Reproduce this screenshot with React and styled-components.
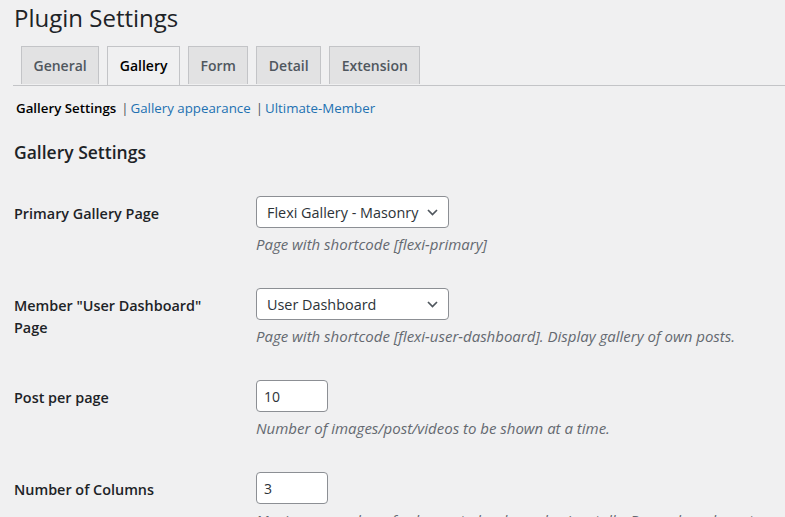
import React from 'react';
import styled, { createGlobalStyle } from 'styled-components';

const GlobalStyle = createGlobalStyle`
  body {
    margin: 0;
    background: #f0f0f1;
    color: #3c434a;
    font-family: "Open Sans", "Noto Sans", sans-serif;
    font-size: 13px;
  }
`;

const Wrap = styled.div`
  padding: 0 0 0 13px;
  overflow: hidden;
`;

const PageTitle = styled.h1`
  margin: 0;
  padding: 3px 0 0 1px;
  font-size: 24px;
  font-weight: 400;
  line-height: 30px;
  color: #1d2327;
`;

const TabBar = styled.nav`
  display: flex;
  gap: 8px;
  margin-top: 13px;
  padding-left: 8px;
  border-bottom: 1px solid #c3c4c7;
  height: 39px;
`;

const Tab = styled.a`
  display: block;
  padding: 7px 11.5px;
  font-size: 14px;
  font-weight: 600;
  line-height: 24px;
  border: 1px solid #c3c4c7;
  border-bottom: none;
  background: ${p => (p.$active ? '#f0f0f1' : '#e2e2e3')};
  color: ${p => (p.$active ? '#000' : '#50575e')};
  height: ${p => (p.$active ? '39px' : '38px')};
  box-sizing: border-box;
  text-decoration: none;
`;

const SubNav = styled.ul`
  display: flex;
  margin: 12px 0 0 3px;
  padding: 0;
  list-style: none;
  font-size: 13.3px;
  line-height: 20px;
`;

const SubItem = styled.li`
  margin-right: 5px;
  color: ${p => (p.$current ? '#000' : '#2271b1')};
  font-weight: ${p => (p.$current ? 600 : 400)};
`;

const Sep = styled.span`
  color: #50575e;
  font-weight: 400;
  margin-right: 2px;
`;

const SectionTitle = styled.h2`
  margin: 22px 0 0 1px;
  font-size: 17.5px;
  font-weight: 600;
  line-height: 24px;
  color: #1d2327;
`;

const Table = styled.div`
  margin-top: 17px;
`;

const Row = styled.div`
  display: grid;
  grid-template-columns: 243px 1fr;
  height: 92px;
`;

const Label = styled.div`
  padding: 22px 0 0 1px;
  font-size: 14.4px;
  font-weight: 600;
  line-height: 22px;
  color: #1d2327;
  width: 200px;
`;

const Field = styled.div`
  padding-top: 15px;
`;

const SelectBox = styled.div`
  display: flex;
  align-items: center;
  justify-content: space-between;
  width: ${p => p.$width}px;
  height: 32px;
  box-sizing: border-box;
  padding: 0 10px 0 10px;
  background: #fff;
  border: 1px solid #8c8f94;
  border-radius: 4px;
  font-size: 14.4px;
  color: #2c3338;
`;

const NumberInput = styled.input`
  display: block;
  width: 72px;
  height: 32px;
  box-sizing: border-box;
  padding: 0 7px;
  background: #fff;
  border: 1px solid #8c8f94;
  border-radius: 4px;
  font: 14px "Open Sans", "Noto Sans", sans-serif;
  color: #2c3338;
`;

const Description = styled.p`
  margin: 6px 0 0;
  font-size: 15px;
  font-style: italic;
  line-height: 21px;
  color: #646970;
  white-space: nowrap;
`;

const Chevron = () => (
  <svg width="11" height="7" viewBox="0 0 11 7">
    <polyline points="1,1 5.5,5.5 10,1" fill="none" stroke="#50575e" strokeWidth="1.7" />
  </svg>
);

const rows = [
  { label: 'Primary Gallery Page', select: 'Flexi Gallery - Masonry', width: 193, desc: 'Page with shortcode [flexi-primary]' },
  { label: 'Member "User Dashboard" Page', select: 'User Dashboard', width: 193, desc: 'Page with shortcode [flexi-user-dashboard]. Display gallery of own posts.' },
  { label: 'Post per page', input: '10', desc: 'Number of images/post/videos to be shown at a time.' },
  { label: 'Number of Columns', input: '3', desc: 'Maximum number of columns to be shown horizontally. Depends on layout.' },
];

const App = () => (
  <Wrap>
    <GlobalStyle />
    <PageTitle>Plugin Settings</PageTitle>
    <TabBar>
      <Tab>General</Tab>
      <Tab $active>Gallery</Tab>
      <Tab>Form</Tab>
      <Tab>Detail</Tab>
      <Tab>Extension</Tab>
    </TabBar>
    <SubNav>
      <SubItem $current>Gallery Settings</SubItem>
      <SubItem><Sep>|</Sep>Gallery appearance</SubItem>
      <SubItem><Sep>|</Sep>Ultimate-Member</SubItem>
    </SubNav>
    <SectionTitle>Gallery Settings</SectionTitle>
    <Table>
      {rows.map(r => (
        <Row key={r.label}>
          <Label>{r.label}</Label>
          <Field>
            {r.select ? (
              <SelectBox $width={r.width}>
                <span>{r.select}</span>
                <Chevron />
              </SelectBox>
            ) : (
              <NumberInput defaultValue={r.input} />
            )}
            <Description>{r.desc}</Description>
          </Field>
        </Row>
      ))}
    </Table>
  </Wrap>
);

export default App;
